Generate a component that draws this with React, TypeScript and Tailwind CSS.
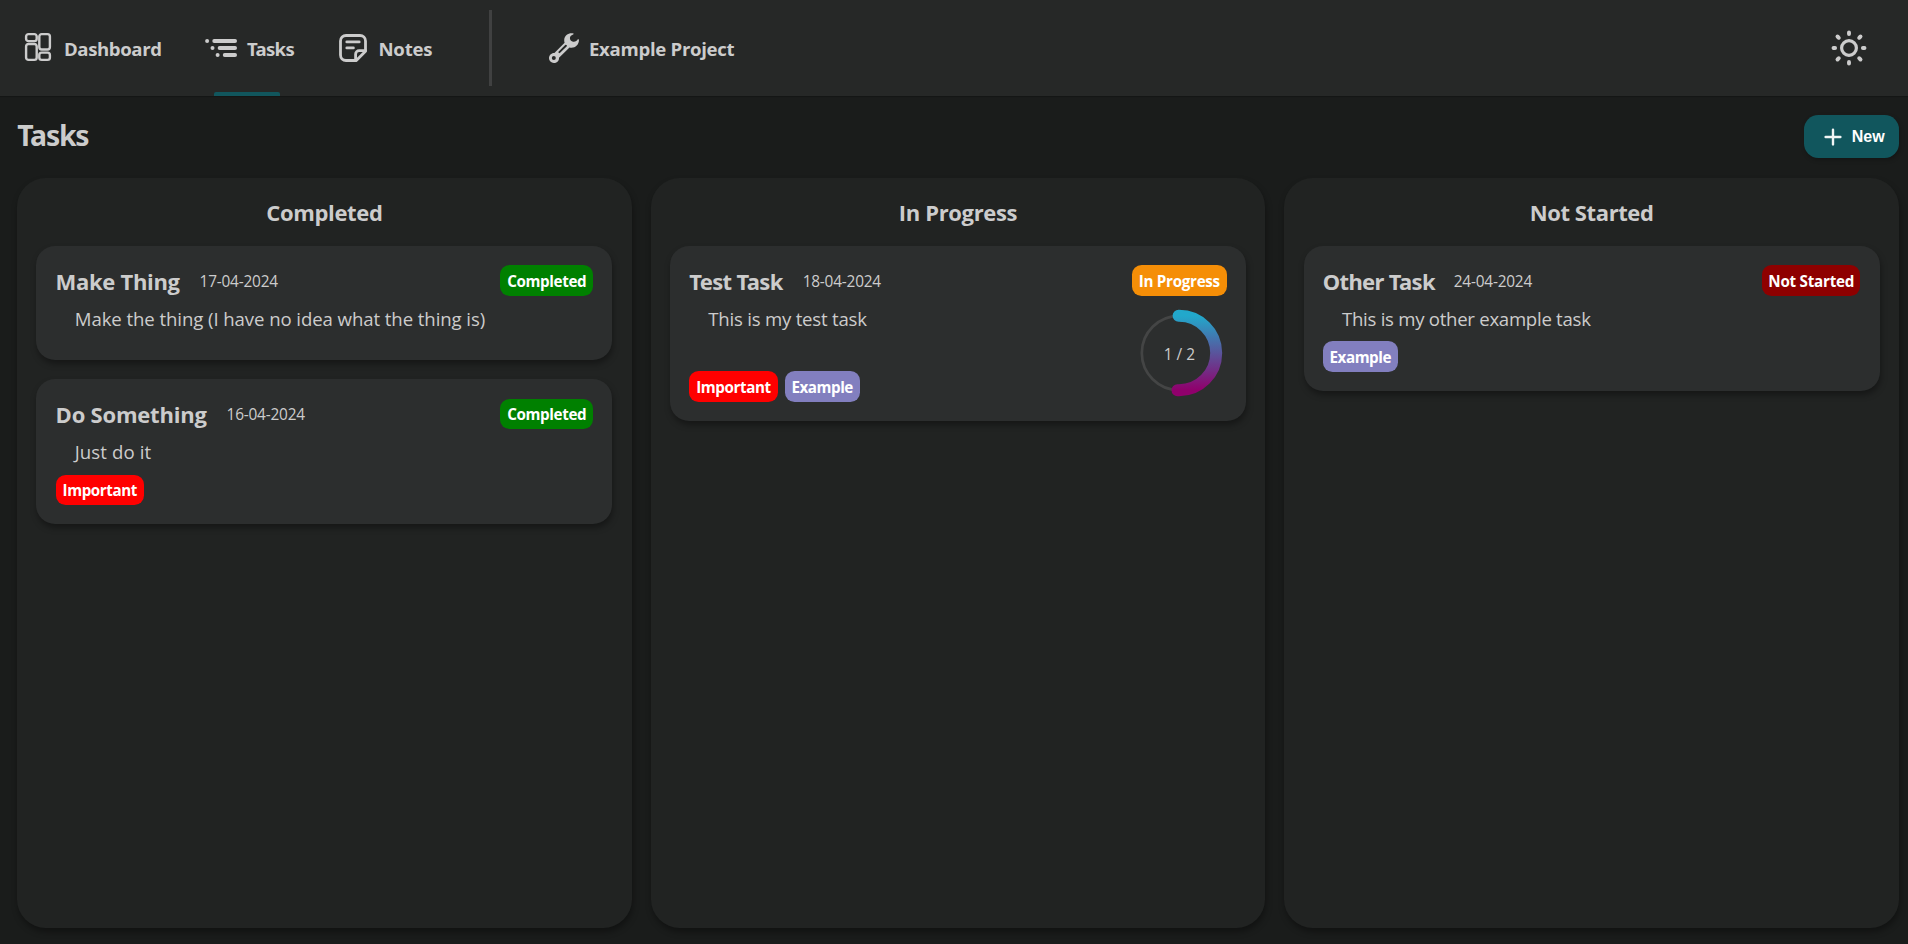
import type { ReactNode } from "react";
import { clsx } from "clsx";

function DashboardIcon() {
  return (
    <svg width="28" height="30" viewBox="0 0 28 30" fill="none" stroke="currentColor" strokeWidth="2.4">
      <rect x="2.1" y="2.1" width="10.6" height="7" rx="2.4" />
      <rect x="2.1" y="12" width="10.6" height="15.9" rx="2.4" />
      <rect x="15.3" y="2.1" width="10.6" height="15.4" rx="2.4" />
      <rect x="15.3" y="20.6" width="10.6" height="7.3" rx="2.4" />
    </svg>
  );
}

function TasksIcon() {
  return (
    <svg width="32" height="20" viewBox="0 0 32 20" fill="currentColor">
      <circle cx="2.1" cy="3" r="2" />
      <circle cx="7.5" cy="10" r="2" />
      <circle cx="12.6" cy="17" r="2" />
      <rect x="7.3" y="1.1" width="24.7" height="3.8" rx="1.9" />
      <rect x="12.7" y="8.1" width="19.3" height="3.8" rx="1.9" />
      <rect x="17.8" y="15.1" width="14.2" height="3.8" rx="1.9" />
    </svg>
  );
}

function NotesIcon() {
  return (
    <svg width="28" height="28" viewBox="0 0 28 28" fill="none" stroke="currentColor" strokeWidth="2.8" strokeLinecap="round" strokeLinejoin="round">
      <path d="M7 1.5H21A5.5 5.5 0 0 1 26.5 7V17.3L17.3 26.5H7A5.5 5.5 0 0 1 1.5 21V7A5.5 5.5 0 0 1 7 1.5Z" />
      <path d="M26.5 16.6H20.2A3.6 3.6 0 0 0 16.6 20.2V26.5" />
      <path d="M7.8 7.9H20.2M7.8 13.9H14.4" />
    </svg>
  );
}

function WrenchIcon() {
  return (
    <svg width="30" height="30" viewBox="0 0 30 30" fill="currentColor">
      <path
        fillRule="evenodd"
        d="M24.6 0.5C20.5-0.8 15.3 2 15.2 7C15.2 8.2 15.3 9 15.6 9.7L5.4 19.9C2.4 19.7 0 22.1 0 25.1C0 27.9 2.2 30 4.9 30C7.8 30 10.2 27.7 10 24.8L20.5 14.4C25.1 15.8 30 12.4 30 6.7L29 6.1C27.7 8.4 25.7 9.3 23.4 8.6C20.6 7.6 20.1 4.2 22.3 2.4L24.5 1.2ZM4.8 23.1A2 2 0 1 1 4.8 27.1A2 2 0 0 1 4.8 23.1ZM17.3 12A0.9 0.9 0 0 1 17.6 13.4L11.1 19.8A0.9 0.9 0 0 1 9.7 18.5L16.2 12.1A0.9 0.9 0 0 1 17.3 12Z"
      />
    </svg>
  );
}

function SunIcon() {
  return (
    <svg width="36" height="36" viewBox="-18 -18 36 36" fill="none" stroke="currentColor" strokeLinecap="round">
      <circle r="7.4" strokeWidth="3.2" />
      <path
        strokeWidth="3.9"
        d="M0-15.5V-13.9M0 15.5V13.9M-15.5 0H-13.9M15.5 0H13.9M-11.5-11.5L-10.2-10.2M11.5-11.5L10.2-10.2M-11.5 11.5L-10.2 10.2M11.5 11.5L10.2 10.2"
      />
    </svg>
  );
}

function PlusIcon() {
  return (
    <svg width="18" height="18" viewBox="0 0 18 18" fill="none" stroke="#f1f5f5" strokeWidth="2.4" strokeLinecap="round">
      <path d="M9 1.6V16.4M1.6 9H16.4" />
    </svg>
  );
}

function ProgressRing() {
  return (
    <div className="mt-3 mr-[3px] grid size-[90px] shrink-0 place-items-center">
      <svg className="col-start-1 row-start-1" width="90" height="90" viewBox="0 0 90 90" fill="none">
        <defs>
          <linearGradient id="ring" gradientUnits="userSpaceOnUse" x1="0" y1="8" x2="0" y2="82">
            <stop offset="0" stopColor="#22a8cb" />
            <stop offset="1" stopColor="#90006c" />
          </linearGradient>
        </defs>
        <circle cx="45" cy="45" r="37.2" stroke="#444545" strokeWidth="2.7" />
        <path d="M44.6 7.8H45A37.2 37.2 0 0 1 45 82.2H43.5" stroke="url(#ring)" strokeWidth="12" strokeLinecap="round" />
      </svg>
      <span className="col-start-1 row-start-1 pt-1 pl-px text-[15.4px] leading-5">1 / 2</span>
    </div>
  );
}

function Badge({ className, children }: { className: string; children: ReactNode }) {
  return (
    <span className={clsx("flex h-[30.6px] shrink-0 items-center justify-center rounded-[9.6px] pt-[2px] text-[15.2px] font-bold whitespace-nowrap text-white", className)}>
      {children}
    </span>
  );
}

const Completed = () => <Badge className="w-[93px] bg-[#008000] tracking-[-0.36px]">Completed</Badge>;
const InProgress = () => <Badge className="w-[95px] bg-[#f58e07] tracking-[-0.3px]">In Progress</Badge>;
const NotStarted = () => <Badge className="w-[98.5px] bg-[#8e0000] tracking-[-0.25px]">Not Started</Badge>;
const Important = () => <Badge className="w-[88.5px] bg-[#ff0000] tracking-[-0.41px]">Important</Badge>;
const Example = () => <Badge className="w-[75px] bg-[#827fbf] tracking-[-0.46px]">Example</Badge>;

type CardProps = {
  title: string;
  titleClass: string;
  date: string;
  text: string;
  textClass: string;
  status: ReactNode;
  tags?: ReactNode;
  ring?: boolean;
};

function Card({ title, titleClass, date, text, textClass, status, tags, ring }: CardProps) {
  return (
    <article className="rounded-[19.2px] bg-[#2c2e2e] px-[19.2px] pt-[19.2px] pb-[19px] shadow-[1px_4px_6px_rgba(0,0,0,0.35)]">
      <div className="flex h-[30.6px] items-center">
        <h3 className={clsx("pt-[1.2px] text-[22px] leading-7 font-bold whitespace-nowrap", titleClass)}>{title}</h3>
        <time className="pt-[3px] text-[15.4px] leading-6 tracking-[-0.2px]">{date}</time>
        <div className="ml-auto">{status}</div>
      </div>
      <div className="flex justify-between">
        <div className="flex flex-col justify-between">
          <p className={clsx("flex h-[45.4px] items-center pt-[1.2px] pl-[19.2px] text-[18.6px] leading-6 whitespace-nowrap", textClass)}>{text}</p>
          {tags && <div className="flex gap-[7px]">{tags}</div>}
        </div>
        {ring && <div className="h-[106px]"><ProgressRing /></div>}
      </div>
    </article>
  );
}

function Column({ title, titleClass, children }: { title: string; titleClass: string; children: ReactNode }) {
  return (
    <section className="flex flex-col gap-[19.2px] rounded-[28.8px] bg-[#212322] px-[19.2px] pt-[18.8px] shadow-[1px_4px_6px_rgba(0,0,0,0.35)]">
      <h2 className={clsx("h-[30px] text-center text-[22px] leading-[30px] font-bold", titleClass)}>{title}</h2>
      {children}
    </section>
  );
}

export default function App() {
  return (
    <div className="flex h-[944px] w-full flex-col overflow-hidden bg-[#1a1c1b] font-['Open_Sans','Noto_Sans',sans-serif] text-[#cccccc]">
      <header className="flex h-24 shrink-0 items-center bg-[#262827] pl-[24px] text-[18.6px] font-bold shadow-[0_1px_1px_rgba(0,0,0,0.2)]">
        <a className="flex h-24 w-[181px] items-center gap-3">
          <span className="-mt-[2px]"><DashboardIcon /></span>
          <span className="pt-0.5 tracking-[-0.4px]">Dashboard</span>
        </a>
        <a className="relative flex h-24 w-[134px] items-center gap-[10px]">
          <TasksIcon />
          <span className="pt-0.5 font-['Noto_Sans',sans-serif] tracking-[-0.7px]">Tasks</span>
          <span className="absolute bottom-0 left-[9px] h-1 w-[66px] rounded-t-[2px] bg-[#11565d]" />
        </a>
        <a className="flex h-24 w-[150px] items-center gap-[11.5px]">
          <NotesIcon />
          <span className="pt-0.5 tracking-[-0.25px]">Notes</span>
        </a>
        <div className="h-19 w-[3px] bg-[#404141]" />
        <a className="ml-[57px] flex items-center gap-[10px]">
          <WrenchIcon />
          <span className="pt-0.5 tracking-[-0.3px]">Example Project</span>
        </a>
        <button className="mr-[41px] ml-auto"><SunIcon /></button>
      </header>

      <main className="flex min-h-0 grow flex-col pr-[9.2px] pb-4 pl-[17.2px]">
        <div className="flex h-[82px] shrink-0 items-center justify-between">
          <h1 className="-mt-1 font-['Noto_Sans',sans-serif] text-[28.4px] leading-9 font-bold tracking-[-1.2px]">Tasks</h1>
          <button className="-mt-px flex h-[43px] w-[95px] items-center rounded-[14.4px] bg-[#11565d] pl-5 font-['Liberation_Sans',sans-serif] text-base font-bold text-white shadow-[1px_2px_4px_rgba(0,0,0,0.25)]">
            <PlusIcon />
            <span className="ml-[10px]">New</span>
          </button>
        </div>
        <div className="grid grow grid-cols-3 gap-[19.2px]">
          <Column title="Completed" titleClass="tracking-[-0.33px]">
            <Card
              title="Make Thing" titleClass="w-[144px] tracking-[-0.3px]" date="17-04-2024"
              text="Make the thing (I have no idea what the thing is)" textClass="tracking-[-0.08px]"
              status={<Completed />}
            />
            <Card
              title="Do Something" titleClass="w-[171px] tracking-[-0.2px]" date="16-04-2024"
              text="Just do it" textClass="tracking-[0.1px]"
              status={<Completed />} tags={<Important />}
            />
          </Column>
          <Column title="In Progress" titleClass="tracking-[-0.35px]">
            <Card
              title="Test Task" titleClass="w-[113.5px] font-['Noto_Sans',sans-serif] tracking-[-0.65px]" date="18-04-2024"
              text="This is my test task" textClass="tracking-[-0.22px]"
              status={<InProgress />} tags={<><Important /><Example /></>} ring
            />
          </Column>
          <Column title="Not Started" titleClass="tracking-[-0.4px]">
            <Card
              title="Other Task" titleClass="w-[131px] font-['Noto_Sans',sans-serif] tracking-[-0.65px]" date="24-04-2024"
              text="This is my other example task" textClass="tracking-[-0.27px]"
              status={<NotStarted />} tags={<Example />}
            />
          </Column>
        </div>
      </main>
    </div>
  );
}
